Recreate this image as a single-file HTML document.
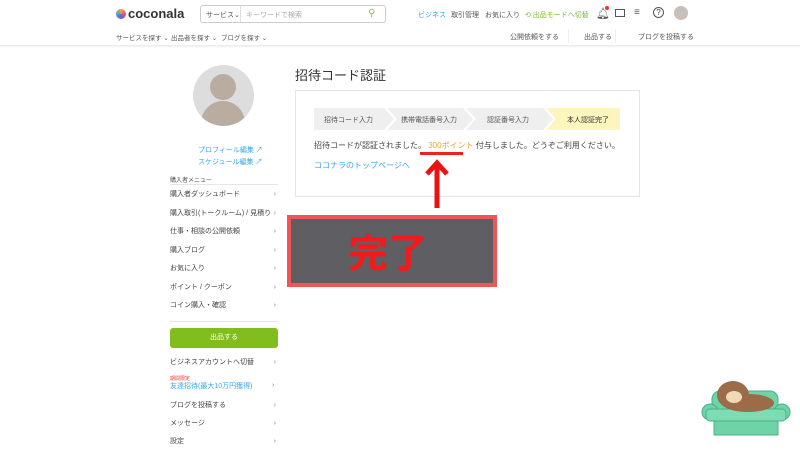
<!DOCTYPE html>
<html><head><meta charset="utf-8"><style>
*{margin:0;padding:0;box-sizing:border-box}
body{width:800px;height:450px;overflow:hidden;background:#fff;font-family:"Liberation Sans","Noto Sans CJK JP",sans-serif;color:#333;position:relative}
.a{position:absolute;white-space:nowrap}
.s{font-size:7px;color:#555}
.menu div{position:absolute;left:170px;width:108px;font-size:7px;color:#444;height:18px;line-height:10px}
.menu div span{position:absolute;right:2px;top:0;color:#888}
</style></head><body>
<div class="a" style="left:116px;top:9px;width:10px;height:10px;border-radius:50%;background:conic-gradient(#f5a623,#e94b8a,#6a5bd6,#3aa6e8,#f5a623)"></div>
<div class="a" style="left:128px;top:6px;font-size:13px;font-weight:bold;color:#333">coconala</div>
<div class="a" style="left:200px;top:5px;width:186px;height:18px;border:1px solid #ccc;border-radius:3px"></div>
<div class="a s" style="left:206px;top:10px">サービス⌄</div>
<div class="a" style="left:240px;top:6px;width:1px;height:16px;background:#ddd"></div>
<div class="a s" style="left:246px;top:10px;color:#aaa">キーワードで検索</div>
<div class="a" style="left:368px;top:8px;font-size:10px;color:#8bc34a">⚲</div>
<div class="a s" style="left:418px;top:10px;color:#3aa6e8">ビジネス</div>
<div class="a s" style="left:451px;top:10px">取引管理</div>
<div class="a s" style="left:485px;top:10px">お気に入り</div>
<div class="a s" style="left:525px;top:10px;color:#7cb82f">⟲ 出品モードへ切替</div>
<div class="a" style="left:596px;top:7px;font-size:11px;color:#555">🔔︎</div>
<div class="a" style="left:605px;top:6px;width:4px;height:4px;border-radius:50%;background:#e33"></div>
<div class="a" style="left:615px;top:9px;width:10px;height:8px;border:1px solid #555"></div>
<div class="a" style="left:634px;top:7px;font-size:10px;color:#555">≡</div>
<div class="a" style="left:653px;top:7px;width:11px;height:11px;border:1px solid #555;border-radius:50%;font-size:8px;text-align:center;line-height:9px">?</div>
<div class="a" style="left:674px;top:6px;width:14px;height:14px;border-radius:50%;background:#c8c0b8"></div>
<div class="a s" style="left:116px;top:32px;font-size:6.5px">サービスを探す ⌄</div>
<div class="a s" style="left:171px;top:32px;font-size:6.5px">出品者を探す ⌄</div>
<div class="a s" style="left:221px;top:32px;font-size:6.5px">ブログを探す ⌄</div>
<div class="a s" style="left:510px;top:32px">公開依頼をする</div>
<div class="a" style="left:568px;top:29px;width:1px;height:14px;background:#eee"></div>
<div class="a s" style="left:584px;top:32px">出品する</div>
<div class="a" style="left:615px;top:29px;width:1px;height:14px;background:#eee"></div>
<div class="a s" style="left:638px;top:32px">ブログを投稿する</div>
<div class="a" style="left:0;top:45px;width:800px;height:3px;background:linear-gradient(#e8e8e8,#fff)"></div>
<div class="a" style="left:193px;top:65px;width:61px;height:61px;border-radius:50%;background:#ddd;overflow:hidden">
<div class="a" style="left:17px;top:9px;width:26px;height:26px;border-radius:50%;background:#b9aca0"></div>
<div class="a" style="left:8px;top:36px;width:44px;height:30px;border-radius:22px 22px 0 0;background:#b9aca0"></div>
</div>
<div class="a s" style="left:198px;top:145px;color:#3aa6e8">プロフィール編集 ↗</div>
<div class="a s" style="left:198px;top:157px;color:#3aa6e8">スケジュール編集 ↗</div>
<div class="a" style="left:170px;top:175px;font-size:6px;color:#555">購入者メニュー</div>
<div class="a" style="left:170px;top:184px;width:108px;height:1px;background:#e5e5e5"></div>
<div class="menu">
<div style="top:190px">購入者ダッシュボード<span>›</span></div>
<div style="top:209px">購入取引(トークルーム) / 見積り<span>›</span></div>
<div style="top:227px">仕事・相談の公開依頼<span>›</span></div>
<div style="top:246px">購入ブログ<span>›</span></div>
<div style="top:264px">お気に入り<span>›</span></div>
<div style="top:283px">ポイント / クーポン<span>›</span></div>
<div style="top:301px">コイン購入・確認<span>›</span></div>
<div style="top:358px">ビジネスアカウントへ切替<span>›</span></div>
<div style="top:401px">ブログを投稿する<span>›</span></div>
<div style="top:419px">メッセージ<span>›</span></div>
<div style="top:437px">設定<span>›</span></div>
</div>
<div class="a" style="left:170px;top:321px;width:108px;height:1px;background:#e5e5e5"></div>
<div class="a" style="left:170px;top:328px;width:108px;height:20px;background:#82bd1e;border-radius:3px;color:#fff;font-size:7px;text-align:center;line-height:20px">出品する</div>
<div class="a" style="left:170px;top:375px;font-size:5px;color:#e33">期間限定</div>
<div class="a" style="left:170px;top:381px;font-size:7px;color:#3aa6e8">友達招待(最大10万円獲得)</div>
<div class="a" style="left:272px;top:382px;font-size:7px;color:#888">›</div>
<div class="a" style="left:295px;top:65px;font-size:13px;color:#333">招待コード認証</div>
<div class="a" style="left:295px;top:90px;width:345px;height:107px;border:1px solid #e5e5e5;background:#fff"></div>
<svg class="a" style="left:314px;top:108px" width="306" height="22">
<polygon points="0,0 70,0 80,11 70,22 0,22" fill="#efefef"/>
<polygon points="73,0 149,0 159,11 149,22 73,22 83,11" fill="#efefef"/>
<polygon points="152,0 229,0 239,11 229,22 152,22 162,11" fill="#efefef"/>
<polygon points="232,0 306,0 306,22 232,22 242,11" fill="#fdf5be"/>
</svg>
<div class="a s" style="left:324px;top:115px">招待コード入力</div>
<div class="a s" style="left:401px;top:115px">携帯電話番号入力</div>
<div class="a s" style="left:487px;top:115px">認証番号入力</div>
<div class="a s" style="left:567px;top:115px;color:#333">本人認証完了</div>
<div class="a" style="left:314px;top:140px;font-size:8px;color:#444">招待コードが認証されました。 <span style="color:#f0a030">300ポイント</span> 付与しました。どうぞご利用ください。</div>
<div class="a" style="left:420px;top:152px;width:43px;height:3px;background:#e22"></div>
<div class="a" style="left:314px;top:160px;font-size:8px;color:#3aa6e8">ココナラのトップページへ</div>
<svg class="a" style="left:424px;top:158px" width="26" height="52"><path d="M13,50 V6 M3,16 L13,5 L23,16" stroke="#e11" stroke-width="5" fill="none"/></svg>
<div class="a" style="left:287px;top:215px;width:210px;height:72px;background:#5f5e63;border:4px solid #f05656"></div>
<div class="a" style="left:348px;top:221px;font-size:40px;font-weight:bold;color:#f21a1a">完了</div>
<svg class="a" style="left:690px;top:375px" width="110" height="70">
<rect x="22" y="16" width="66" height="24" rx="8" fill="#6fd3a8" stroke="#4ab088"/>
<circle cx="20" cy="37" r="8" fill="#6fd3a8" stroke="#4ab088"/><circle cx="92" cy="37" r="8" fill="#6fd3a8" stroke="#4ab088"/>
<rect x="16" y="34" width="80" height="12" rx="4" fill="#7edcb4" stroke="#4ab088"/>
<rect x="24" y="46" width="64" height="14" fill="#6fd3a8" stroke="#4ab088"/>
<ellipse cx="58" cy="28" rx="26" ry="9" fill="#9c6b4a"/>
<ellipse cx="43" cy="20" rx="16" ry="14" fill="#9c6b4a"/>
<ellipse cx="44" cy="22" rx="8" ry="6" fill="#f0d9b5"/>
</svg>
</body></html>
